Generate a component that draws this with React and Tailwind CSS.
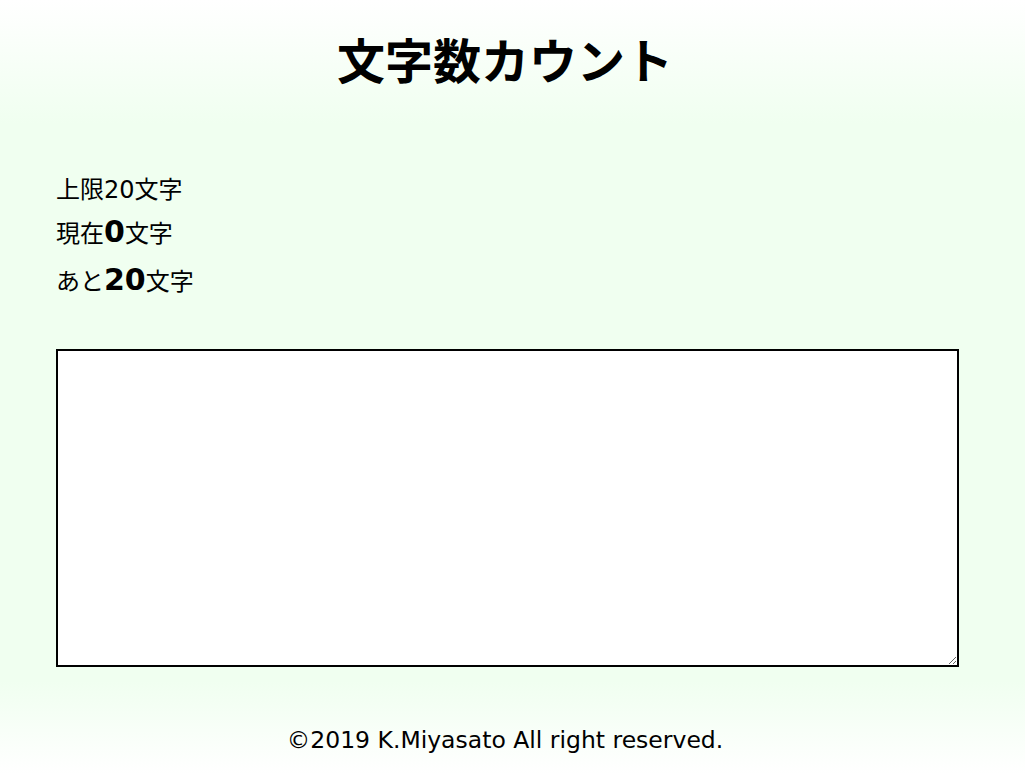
import React, { useState } from 'react';

const LIMIT = 20;

const App = () => {
    const [text, setText] = useState('');
    const count = text.length;

    return (
        <div
            className="min-h-[774px] w-full bg-[linear-gradient(to_bottom,#ffffff_0%,#f0fff0_16%,#f0fff0_88%,#ffffff_100%)] text-black"
            style={{ fontFamily: '"DejaVu Sans", "Noto Sans CJK JP", sans-serif' }}
        >
            <div className="w-[1010px]">
                {/* Header */}
                <h1
                    className="pt-[23px] text-center text-[48px] font-bold leading-[70px]"
                    style={{ fontFamily: '"Noto Sans CJK JP", sans-serif' }}
                >
                    文字数カウント
                </h1>

                {/* Counter */}
                <div className="mt-[77px] pl-[56px] text-[24px] leading-[44px]">
                    <p className="leading-[40px]">上限{LIMIT}文字</p>
                    <p>
                        現在<span className="text-[30px] font-bold">{count}</span>文字
                    </p>
                    <p className="leading-[48px]">
                        あと<span className="text-[30px] font-bold">{LIMIT - count}</span>文字
                    </p>
                </div>

                {/* Textarea */}
                <div className="mt-[43px] pl-[56px]">
                    <textarea
                        value={text}
                        onChange={(e) => setText(e.target.value)}
                        className="block h-[318px] w-[903px] border-2 border-black bg-white p-1 text-[20px] outline-none"
                    />
                </div>

                {/* Footer */}
                <footer className="mt-[56px] pb-[14px] text-center text-[23.5px] leading-[34px]">
                    ©2019 K.Miyasato All right reserved.
                </footer>
            </div>
        </div>
    );
};

export default App;
